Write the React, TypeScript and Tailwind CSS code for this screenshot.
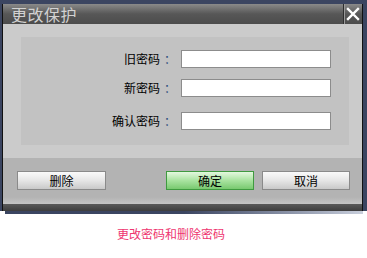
import React from 'react';

const rows = [
  { label: '旧密码', gap: 'mt-0' },
  { label: '新密码', gap: 'mt-[11px]' },
  { label: '确认密码', gap: 'mt-[15px]' },
];

const CloseIcon: React.FC = () => (
  <svg width="14" height="14" viewBox="0 0 14 14">
    <path d="M2 2 L12 12 M12 2 L2 12" stroke="#ffffff" strokeWidth="2.4" strokeLinecap="square" />
  </svg>
);

const GreyButton: React.FC<{ label: string; w: string }> = ({ label, w }) => (
  <button
    className={`${w} h-[19px] border border-[#8a8a8a] bg-gradient-to-b from-[#fafafa] via-[#e6e6e6] to-[#c9c9c9] text-[12px] leading-none text-black flex items-center justify-center`}
  >
    {label}
  </button>
);

const App: React.FC = () => {
  return (
    <div className="w-[367px] h-[258px] bg-white flex flex-col font-['Noto_Sans_CJK_SC','Noto_Sans',sans-serif]">
      {/* Outer navy frame */}
      <div className="bg-[#3b4561] pt-[4px] pl-[2px] pr-[4px]">
        <div className="border-x border-[#111] flex flex-col">
          {/* Title bar */}
          <div className="h-[20px] flex bg-gradient-to-b from-[#8a8a8a] via-[#575757] to-[#4c4c4c]">
            <div className="flex-1 pl-[8px] text-[16px] leading-[20px] text-[#d2d2d2] tracking-[0.5px]">更改保护</div>
            <div className="w-[19px] border-l border-[#2e2e2e] shadow-[inset_1px_0_0_#9a9a9a] flex items-center justify-center">
              <CloseIcon />
            </div>
          </div>

          {/* Body */}
          <div className="bg-[#cbcbcb] pt-[13px] pb-[13px] pl-[18px] pr-[13px]">
            <div className="bg-[#c2c2c2] h-[108px] pt-[13px] flex flex-col">
              {rows.map((r) => (
                <div key={r.label} className={`flex items-center h-[18px] ${r.gap}`}>
                  <span className="w-[139px] text-right text-[12px] leading-none text-black">{r.label}</span>
                  <span className="ml-[4px] w-[12px] text-[12px] leading-none text-[#2c4f7c]">：</span>
                  <input
                    type="text"
                    className="ml-[5px] w-[150px] h-[18px] bg-white border border-[#8c8c8c] outline-none"
                  />
                </div>
              ))}
            </div>
          </div>

          {/* Footer */}
          <div className="bg-[#b3b3b3] h-[46px] flex flex-col">
            <div className="flex pt-[13px] pl-[14px] pr-[12px] justify-between">
              <GreyButton label="删除" w="w-[89px]" />
              <div className="flex gap-[8px]">
                <button className="w-[88px] h-[19px] border border-[#3f9a3f] bg-gradient-to-b from-[#e4f8df] via-[#a9e3a0] to-[#78c96f] text-[12px] leading-none text-black flex items-center justify-center">
                  确定
                </button>
                <GreyButton label="取消" w="w-[88px]" />
              </div>
            </div>
            <div className="mt-auto h-[7px] bg-gradient-to-b from-[#b3b3b3] to-[#c4c4c4]" />
          </div>

          {/* Bottom dark bar */}
          <div className="h-[7px] bg-gradient-to-b from-[#5a5a5a] to-[#3e3e3e]" />
        </div>
      </div>
      <div className="ml-[5px] w-[358px] h-[3px] bg-gradient-to-r from-[#3b4561] via-[#3b4561] to-[#c9cfdc]" />

      {/* Caption */}
      <div className="mt-[13px] pl-[117px] text-[12px] leading-[14px] text-[#ee3570]">更改密码和删除密码</div>
    </div>
  );
};

export default App;
